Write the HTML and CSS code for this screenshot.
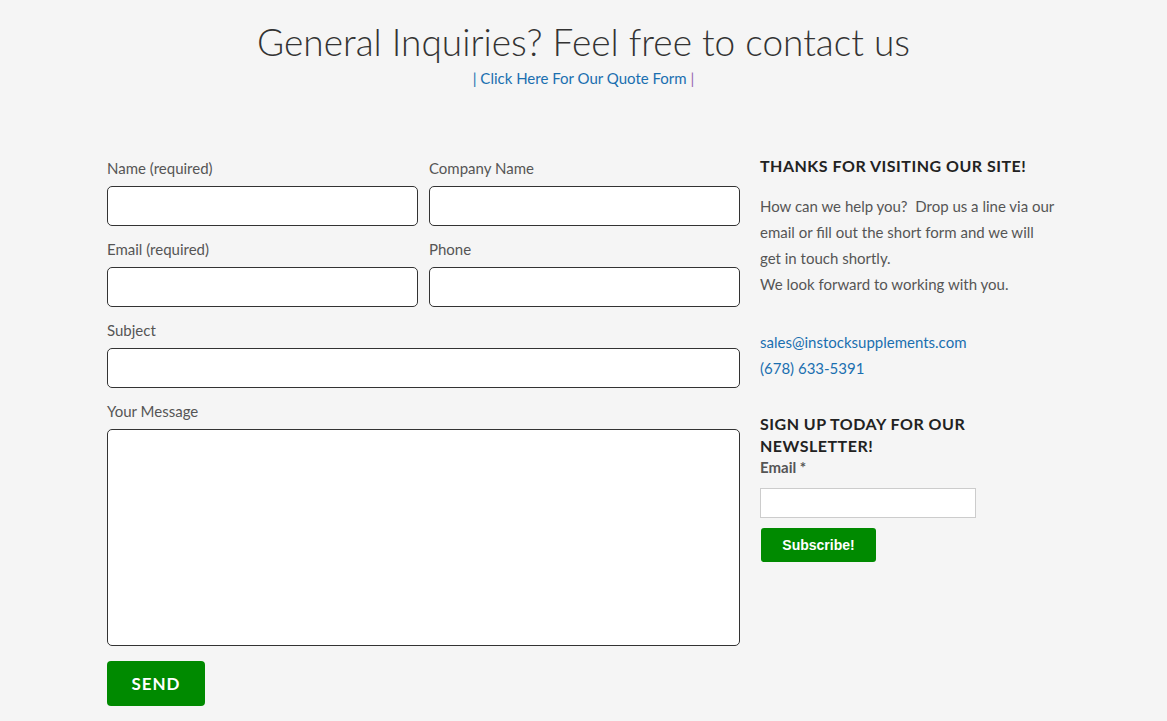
FILE: index.html
```html
<!DOCTYPE html>
<html lang="en">
<head>
<meta charset="utf-8">
<title>Contact</title>
<link rel="stylesheet" href="styles.css">
</head>
<body>
<header class="intro">
  <h1 class="intro-title">General Inquiries? Feel free to contact us</h1>
  <p class="intro-link"><span class="pipe pipe-a">|</span> <a href="#">Click Here For Our Quote Form</a> <span class="pipe pipe-b">|</span></p>
</header>
<main class="content">
  <form class="contact-form">
    <div class="row two">
      <label class="field"><span class="label">Name (required)</span><input class="input" type="text"></label>
      <label class="field"><span class="label">Company Name</span><input class="input" type="text"></label>
    </div>
    <div class="row two">
      <label class="field"><span class="label">Email (required)</span><input class="input" type="text"></label>
      <label class="field"><span class="label">Phone</span><input class="input" type="text"></label>
    </div>
    <div class="row">
      <label class="field"><span class="label">Subject</span><input class="input" type="text"></label>
    </div>
    <div class="row">
      <label class="field"><span class="label">Your Message</span><textarea class="input textarea"></textarea></label>
    </div>
    <button class="send" type="button">SEND</button>
  </form>
  <aside class="sidebar">
    <h2 class="side-title">THANKS FOR VISITING OUR SITE!</h2>
    <p class="side-text">How can we help you?&nbsp; Drop us a line via our email or fill out the short form and we will get in touch shortly.<br>We look forward to working with you.</p>
    <p class="side-contact"><a href="#">sales@instocksupplements.com</a><br><a href="#">(678) 633-5391</a></p>
    <h2 class="side-title news">SIGN UP TODAY FOR OUR NEWSLETTER!</h2>
    <div class="news-label">Email *</div>
    <input class="news-input" type="text">
    <button class="subscribe" type="button">Subscribe!</button>
  </aside>
</main>
</body>
</html>
```
FILE: styles.css
```css
* { box-sizing: border-box; }
html, body { margin: 0; padding: 0; }
body {
  background: #f5f5f5;
  font-family: "Lato", "Open Sans", sans-serif;
  color: #555;
  font-size: 15px;
}
a { color: #1a6fb0; text-decoration: none; }
.intro { text-align: center; padding-top: 19px; }
.intro-title {
  margin: 0;
  font-weight: 300;
  font-size: 37px;
  line-height: 46px;
  color: #333;
}
.intro-link { margin: 3px 0 0; font-size: 15px; line-height: 20px; }
.pipe-a { color: #1a6fb0; }
.pipe-b { color: #9464b0; }
.content {
  display: flex;
  align-items: flex-start;
  padding: 62px 0 0 107px;
  gap: 20px;
}
.contact-form { width: 633px; padding-top: 8px; }
.row { display: flex; gap: 11px; }
.field { display: flex; flex-direction: column; flex: 1; }
.label { font-size: 15px; line-height: 20px; color: #555; margin-bottom: 8px; }
.input {
  height: 40px;
  border: 1px solid #333;
  border-radius: 5px;
  background: #fff;
  margin-bottom: 13px;
  font: inherit;
}
.textarea { height: 217px; resize: none; margin-bottom: 15px; }
.send {
  width: 98px;
  height: 45px;
  border: 0;
  border-radius: 4px;
  background: #008a00;
  color: #fff;
  font-family: inherit;
  font-weight: 700;
  font-size: 17px;
  letter-spacing: 1px;
}
.sidebar { width: 296px; }
.side-title {
  margin: 0;
  font-size: 16px;
  font-weight: 700;
  letter-spacing: 0.5px;
  line-height: 22px;
  color: #222;
  margin-top: 5px;
}
.side-text { margin: 16px 0 0; line-height: 26px; color: #555; }
.side-contact { margin: 32px 0 0; line-height: 26px; }
.side-title.news { margin-top: 32px; width: 230px; }
.news-label { font-weight: 700; color: #555; line-height: 20px; }
.news-input {
  display: block;
  width: 216px;
  height: 30px;
  border: 1px solid #ccc;
  background: #fff;
  margin-top: 11px;
}
.subscribe {
  display: block;
  margin: 10px 0 0 1px;
  width: 115px;
  height: 34px;
  border: 0;
  border-radius: 3px;
  background: #008a00;
  color: #fff;
  font-family: "Liberation Sans", Arial, sans-serif;
  font-weight: 700;
  font-size: 14px;
}
```
